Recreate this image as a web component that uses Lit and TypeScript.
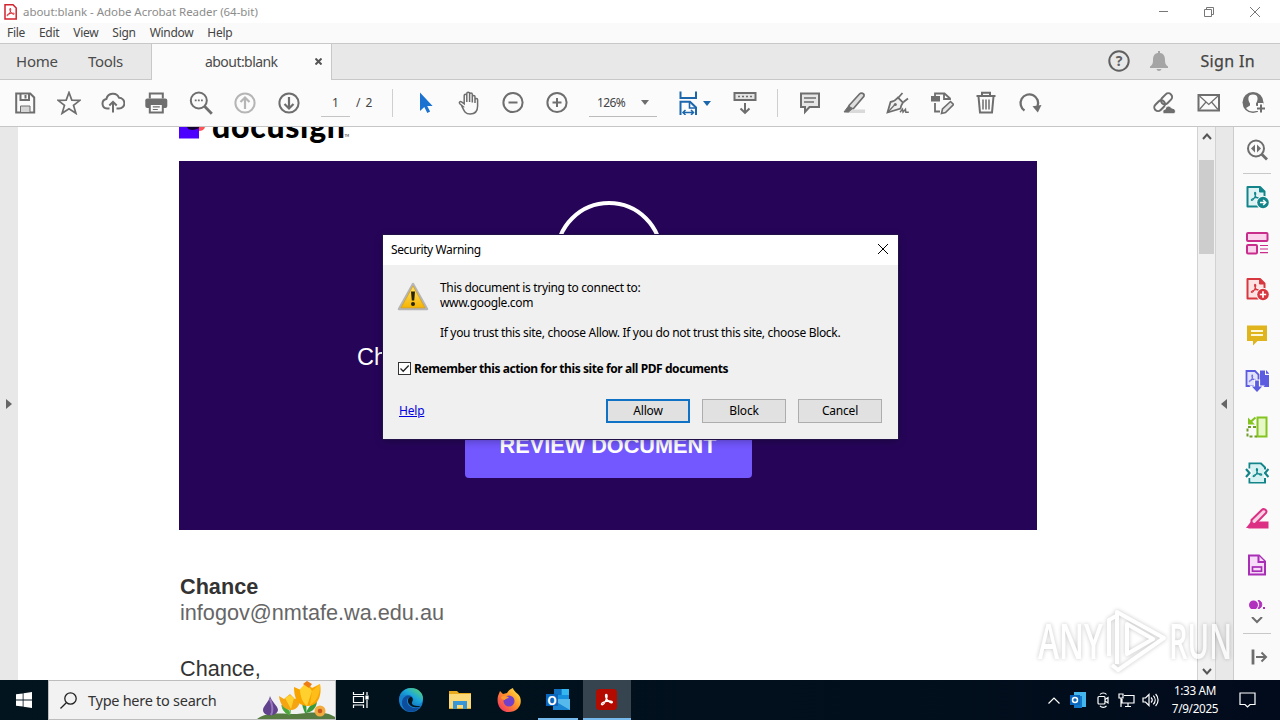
import { LitElement, html, svg, css, TemplateResult } from 'lit';
import { customElement } from 'lit/decorators.js';

const icon = (body: TemplateResult, size = 24) => html`
  <svg class="icon" width=${size} height=${size} viewBox="0 0 ${size} ${size}">${body}</svg>
`;

// the three-lobed Acrobat mark, drawn in a 10x10 box
const trefoil = (x: number, y: number, scale: number, color: string) => svg`
  <path transform="translate(${x} ${y}) scale(${scale})" fill="none" stroke=${color}
    stroke-width="1.1" stroke-linecap="round" stroke-linejoin="round"
    d="M4.6.8c.9 0 .8 1.6.2 3.3C4 6.300 2.500 8.900 1.400 9 .3 9 .7 7.600 2.600 6.900c1.800-.7 4.300-1 5.800-.8 1.500.2 1.300 1.500.1 1.300C7 7.200 4.900 5 4.300 3 3.900 1.700 4 .8 4.600.8z" />
`;

const docIcon = (color: string, tint: string, badge: TemplateResult) => icon(svg`
  <path d="M2.500 2h12.500l4.500 4.500V21.500H2.500z" fill=${tint} stroke=${color} stroke-width="2" stroke-linejoin="round" />
  <path d="M14.500 2v5h5" fill=${color} stroke=${color} stroke-width="1" />
  ${trefoil(5.5, 6.5, 1, color)}
  <circle cx="18" cy="17.500" r="6.800" fill="#fafafa" stroke="none" />
  <circle cx="18" cy="17.500" r="5.800" fill=${color} stroke="none" />
  ${badge}
`);

const icons = {
  save: icon(svg`
    <path d="M3.200 2.500h14l4 4v15h-18z" />
    <path d="M7.500 2.500v6.500h8.500V2.500M12.500 4v3.500" />
    <path d="M7.500 21.500v-6.500h9.500v6.500z" fill="#d5d5d5" stroke-width="1" />
  `),
  star: icon(svg`<path d="M12 1.500l2.800 7.600 8.200.2-6.500 5 2.400 8L12 17.700l-6.900 4.600 2.400-8-6.500-5 8.200-.2z" stroke-width="1.700" />`),
  cloud: icon(svg`
    <path d="M8.500 17.500H6a4.800 4.800 0 0 1-.6-9.500 6.700 6.700 0 0 1 12.700-1.200A5.300 5.300 0 0 1 18 17.500h-2.500" />
    <path d="M12 21.500v-10M8.300 14.500L12 10.800l3.700 3.700" />
  `),
  print: icon(svg`
    <path d="M4.800 7.500V2.500h13v5" />
    <rect x=".3" y="7.500" width="22" height="9.500" rx="2" fill="#6e6e6e" stroke="none" />
    <path d="M4.800 13h13v8.500h-13z" fill="#fbfbfb" />
    <path d="M7.800 15.800h7M7.800 18.500h5" stroke-width="1.200" />
  `),
  find: icon(svg`
    <circle cx="9.800" cy="9.500" r="8" />
    <path d="M15.500 15.300l7.300 7.400" stroke-width="2.800" />
    <path d="M5.800 8.500h1.800v1.800H5.800zM8.900 8.500h1.800v1.800H8.900zM12 8.500h1.800v1.800H12z" fill="#6e6e6e" stroke="none" />
  `),
  up: icon(svg`<circle cx="12" cy="12" r="9.600" stroke="#b5b5b5" /><path d="M12 18V7M7.500 11L12 6.500l4.500 4.500" stroke="#b5b5b5" stroke-width="2.200" />`),
  down: icon(svg`<circle cx="12" cy="12" r="9.600" /><path d="M12 6v11M7.500 13l4.500 4.500 4.500-4.500" stroke-width="2.200" />`),
  pointer: icon(svg`<path d="M7 1.500v18.500l4.300-4 3 6 2.800-1.400-2.900-5.600h5.400z" fill="#1b72d0" stroke="none" />`),
  hand: icon(svg`
    <path stroke-width="1.500" d="M6 15.500L2.800 12.700c-1.200-1.200.2-2.800 1.700-1.900l2.700 2V4.500c0-1.700 2.600-1.700 2.600 0V11 2.500c0-1.700 2.800-1.700 2.800 0V11 3.200c0-1.700 2.700-1.700 2.700 0V11.500 5.700c0-1.700 2.700-1.700 2.700 0V12v-3.500c.3-1.500 2.600-1.400 2.600.3V15c0 5-2.600 8-7.500 8-5 0-6-3-8.100-7.500z" />
  `),
  minus: icon(svg`<circle cx="12" cy="11.500" r="9.600" /><path d="M7.500 11.500h9" stroke-width="2" />`),
  plus: icon(svg`<circle cx="12" cy="11.500" r="9.600" /><path d="M7.500 11.500h9M12 7v9" stroke-width="2" />`),
  fit: icon(svg`
    <g stroke="#1b66ac">
      <path d="M3.500 .5V7H19V.5" /><path d="M3.500 24V10.800h9.500l6 5.700V24" /><path d="M12.500 11v6h6.500" stroke-width="1.600" />
      <path d="M6.500 21.500H16M8.500 19l-2.500 2.500L8.500 24M14 19l2.500 2.500-2.500 2.500" stroke-width="1.500" />
    </g>
  `),
  keyboard: icon(svg`
    <rect x="1.500" y="2" width="21" height="7" fill="#e4e4e4" />
    <path d="M5 5.500h14" stroke-dasharray="2 2" stroke-width="1.700" />
    <path d="M12 12v9M7.500 17.500l4.500 4.300 4.500-4.300" />
  `),
  comment: icon(svg`
    <path d="M3 2.500h18v13.500H11.500l-4.500 5v-5H3z" fill="#e6e6e6" />
    <path d="M6 7h12M6 11h10" stroke-width="1.300" />
  `),
  highlight: icon(svg`
    <path d="M6 18.500h17v3.500H4z" fill="#d9d9d9" stroke="none" />
    <path d="M7 14.500L17.500 3c1.600-1.600 5.400-.8 4.400 2.300L11.500 17.500l-4 .2z" fill="#dedede" stroke-width="1.700" />
    <path d="M6.500 15L2 21h4.500l4-3.500z" fill="#6e6e6e" stroke-width="1" />
  `),
  sign: icon(svg`
    <path d="M1.500 21.500L4.500 11c3-.5 5.500-2 7.500-4.500l5 5c-1.500 2-2 3.500-2.500 6z" fill="#f0f0f0" stroke-width="1.800" />
    <path d="M12.500 6.500L16.500 2M17.500 11L22 7.500" stroke-width="1.800" /><path d="M2 21l6.500-7" stroke-width="1.300" />
    <circle cx="9.300" cy="13.500" r="1.500" fill="#6e6e6e" stroke="none" />
    <path d="M14 21.200l2.500-3 .5 3 2.500-3 .3 3h3" stroke-width="1.400" />
  `),
  edit: icon(svg`
    <path d="M5 5.500V2.500h9.500l5.500 5V9M14 2.500V8h5.500M5 12v8.500h5" stroke-width="1.800" />
    <rect x="1" y="5" width="9" height="5.500" fill="#6e6e6e" stroke="none" />
    <path d="M11.500 22.500l1-4.500L20.500 10.500l3 3-8 8z" fill="#e6e6e6" stroke-width="1.600" />
  `),
  trash: icon(svg`
    <path d="M2.500 5h19M8 4.500V1.800h8V4.500" /><path d="M4.500 5.500l1.500 16h12l1.500-16" />
    <path d="M9 8.500v10M12 8.500v10M15 8.500v10" stroke-width="1.500" />
  `),
  rotate: icon(svg`
    <path d="M6.500 19.500A8.800 8.800 0 1 1 19.500 15.500" stroke-width="2.300" />
    <path d="M14.500 15.300l9-1.300-3.700 7.500z" fill="#6e6e6e" stroke="none" />
  `),
  link: icon(svg`
    <g transform="rotate(-45 11 11)"><rect x="0" y="7.500" width="12" height="7.500" rx="3.700" /><rect x="9.500" y="7.500" width="12.500" height="7.500" rx="3.700" /></g>
    <path d="M12 22.800c-2-1.200-1.300-4.600 1.200-4.500.5-4 5-4.300 6.300-1.300 4.500.2 4.800 4.600 2.500 5.800z" fill="#6e6e6e" stroke="#fbfbfb" stroke-width="1" />
  `),
  mail: icon(svg`<rect x="1.500" y="4" width="20.500" height="15.500" /><path d="M2.500 5l9.300 8.500L21 5M2.500 18.500L9 11M21 18.500L14.500 11" stroke-width="1.200" />`),
  account: icon(svg`
    <circle cx="11" cy="11.500" r="10.500" fill="#6e6e6e" stroke="none" />
    <path d="M11 3.500c5.500 0 5.500 5 3 9v2l4 2.500c-3 4.800-11 4.800-14 0l4-2.500v-2c-2.500-4-2.500-9 3-9z" fill="#fbfbfb" stroke="none" />
    <path d="M18.500 12v11M13 17.500h11" stroke="#fbfbfb" stroke-width="5" />
    <path d="M19 13.500v8M15 17.500h8" stroke-width="2" />
  `),
};

// side panel tools, top to bottom
const tools = [
  docIcon('#13858a', '#dff3f5', svg`<path d="M15 17.500h5.500M18.200 15l2.500 2.500-2.500 2.500" stroke="#fff" stroke-width="1.500" fill="none" />`),
  icon(svg`
    <g fill="#fbd3ec" stroke="#c92d8b" stroke-width="2">
      <rect x="2" y="2" width="20.500" height="8" rx="1" /><rect x="2" y="14" width="10" height="8.500" rx="1" />
      <path d="M15 14.500h8M15 18h8M15 21.700h8" stroke-width="1.200" />
    </g>
  `),
  docIcon('#d7373f', '#fde3e3', svg`<path d="M14.800 17.500h6.400M18 14.300v6.400" stroke="#fff" stroke-width="1.700" />`),
  icon(svg`
    <path d="M2 2.500h20V18H12.500L8 22.500V18H2z" fill="#dfb41c" stroke="none" />
    <path d="M6 8h12M6 12h12" stroke="#fff7d5" stroke-width="2" />
  `),
  icon(svg`
    <path d="M1.500 2h8.500l3.500 3.500V17h-12z" fill="#e2e2fc" stroke="#5c5ce0" stroke-width="1.800" />
    ${trefoil(3.5, 5.5, 0.8, '#5c5ce0')}
    <path d="M15 1.500h5V6h4.500v12H15z" fill="#5c5ce0" stroke="none" /><path d="M21 1l3.500 3.800H21z" fill="#5c5ce0" stroke="none" />
    <path d="M9.500 11h5v6h4L12 24l-6.500-7h4z" fill="#5c5ce0" stroke="#fafafa" stroke-width="1.200" />
  `),
  icon(svg`
    <rect x="12.500" y="2.500" width="9" height="19" fill="#e6f7c8" stroke="#84c420" stroke-width="2" />
    <path d="M11 12H2.500v9.500H12" stroke="#6f9e28" stroke-dasharray="3 2" />
    <path d="M10.500 2.500L6 6.500" stroke="#84c420" stroke-width="2.200" /><path d="M3 2.500v7h7z" fill="#84c420" stroke="none" />
  `),
  icon(svg`
    <path d="M4.500 7.500V2.500H16l4 4v2M4.500 17v4.500H20V17" stroke="#13858a" />
    <path d="M1 8l3.500 4L1 16M23.500 8L20 12l3.500 4" stroke="#13858a" stroke-width="2.200" />
    <path d="M5.500 3.500H15l4 4V21H5.500V15l2-3-2-3z" fill="#d5f1f1" stroke="none" />${trefoil(7.3, 6.8, 1, '#13858a')}
  `),
  icon(svg`
    <path d="M12 14.500h11.500v7H3z" fill="#db3084" stroke="none" />
    <path d="M6.500 13L17 2.800c1.500-1.500 5.800 0 4 3.200L10.500 16.800l-4 .2z" fill="#fbd3e6" stroke="#db3084" />
    <path d="M6 14.500L1 21h7l3-4z" fill="#db3084" stroke="none" />
  `),
  icon(svg`
    <path d="M4 2.500h10l6 6v13H4z" fill="#f7dcf9" stroke="#a82fb5" />
    <path d="M13.500 2.500V9H20" stroke="#a82fb5" fill="#f7dcf9" /><rect x="7.500" y="14" width="9" height="4.200" stroke="#a82fb5" stroke-width="1.700" />
  `),
];

const cross = (size: number) => html`
  <svg width=${size} height=${size} viewBox="0 0 10 10"><path d="M0 0l10 10M10 0L0 10" fill="none" stroke="currentColor" stroke-width="1" /></svg>
`;

@customElement('window-header')
export class WindowHeader extends LitElement {
  static styles = css`
    :host { display: block; }
    .title {
      display: flex;
      align-items: center;
      height: 23px;
      background: #fff;
      color: #8c8c8c;
      font-size: 11.5px;
      padding-left: 4px;
    }
    .title .name { margin-left: 6px; letter-spacing: -.04px; }
    .controls {
      margin-left: auto;
      display: flex;
      padding-right: 2px;
    }
    .controls span { width: 46px; height: 22px; display: grid; place-items: center; color: #777; }
    .controls svg { fill: none; stroke: #777; }
    .menu {
      display: flex;
      gap: 14px;
      align-items: center;
      height: 20px;
      padding-left: 7px;
      box-sizing: border-box;
      padding-bottom: 1px;
      background: #fafafa;
      font-size: 12px;
      letter-spacing: -.3px;
      color: #444;
    }
    .tabs {
      display: flex;
      box-sizing: border-box;
      height: 37px;
      border-top: 1px solid #c8c8c8;
      border-bottom: 1px solid #c8c8c8;
      background: #e8e8e8;
      color: #4b4b4b;
      font-size: 15px;
      align-items: center;
    }
    .home, .tools { padding-bottom: 2px; }
    .home { margin-left: 16px; width: 72px; letter-spacing: -.2px; }
    .tools { width: 63px; letter-spacing: -.3px; }
    .tab {
      box-sizing: border-box;
      width: 181px;
      height: 36px;
      align-self: flex-start;
      background: #fbfbfb;
      border: solid #c8c8c8;
      border-width: 0 1px;
      display: flex;
      align-items: center;
      padding: 0 9px 1px 53px;
      justify-content: space-between;
      font-size: 14px;
      letter-spacing: -.55px;
    }
    .tab svg { stroke-width: 2; color: #555; }
    .account { margin-left: auto; display: flex; align-items: center; padding: 0 25px 2px 0; }
    .account svg { fill: none; stroke: #606060; stroke-width: 2; }
    .account .bell { margin: 0 32px 0 20px; fill: #a5a5a5; stroke: none; }
    .signin { font-size: 16px; letter-spacing: .35px; color: #444; -webkit-text-stroke: .25px #444; }
    .account .help { font: bold 14px 'Noto Sans', sans-serif; fill: #606060; stroke: none; }
  `;

  render() {
    return html`
      <div class="title">
        <svg width="13" height="16" viewBox="0 0 13 16">
          <path d="M1 .8h8l3.200 3.200v11H1z" fill="#fff" stroke="#d2222d" stroke-width="1.500" />
          ${trefoil(2.3, 4, 0.85, '#d2222d')}
        </svg>
        <span class="name">about:blank - Adobe Acrobat Reader (64-bit)</span>
        <div class="controls">
          <span><svg width="10" height="10"><path d="M1 4.500h10" /></svg></span>
          <span><svg width="10" height="10"><path d="M.5 2.500h7v7h-7zM2.500 2.500v-2h7v7h-2" /></svg></span>
          <span>${cross(10)}</span>
        </div>
      </div>
      <div class="menu">
        ${['File', 'Edit', 'View', 'Sign', 'Window', 'Help'].map((m) => html`<span>${m}</span>`)}
      </div>
      <div class="tabs">
        <span class="home">Home</span>
        <span class="tools">Tools</span>
        <div class="tab">
          <span>about:blank</span>
          <svg width="7" height="7" viewBox="0 0 7 7"><path d="M.5.5l6 6M6.500.5l-6 6" stroke="#555" /></svg>
        </div>
        <div class="account">
          <svg width="22" height="22"><circle cx="11" cy="11" r="9.700" /><text class="help" x="7.800" y="16">?</text></svg>
          <svg class="bell" width="18" height="20" viewBox="0 0 18 20">
            <path d="M8 0h2v2c4 .5 5 3.500 5 7 0 4 1 5 3 6.500V17H0v-1.500C2 14 3 13 3 9c0-3.500 1-6.500 5-7zM6.500 18h5c-.5 2.500-4.500 2.500-5 0z" />
          </svg>
          <span class="signin">Sign In</span>
        </div>
      </div>
    `;
  }
}

@customElement('tool-bar')
export class ToolBar extends LitElement {
  static styles = css`
    :host {
      display: flex;
      align-items: center;
      box-sizing: border-box;
      height: 47px;
      padding: 0 4px 0 3px;
      border-bottom: 1px solid #c6c6c6;
      background: #fbfbfb;
      color: #444;
      font-size: 12px;
    }
    .cell { width: 44px; height: 46px; display: grid; place-items: center; }
    .icon { fill: none; stroke: #6e6e6e; stroke-width: 2; }
    .page { width: 29px; box-sizing: border-box; border-bottom: 1px solid #c4c4c4; height: 27px; line-height: 26px; padding-left: 11px; margin-left: 10px; }
    .count { width: 36px; margin-left: 6px; word-spacing: 2px; height: 27px; line-height: 26px; }
    .divider { width: 1px; height: 28px; background: #cfcfcf; }
    .divider.first { margin-right: 10px; }
    .divider.last { margin: 0 10px; }
    .zoom {
      display: flex;
      align-items: center;
      justify-content: space-between;
      box-sizing: border-box;
      width: 68px;
      height: 28px;
      margin: 0 10px;
      padding: 0 8px 0 8px;
      border-bottom: 1px solid #bbb;
      letter-spacing: -.6px;
    }
    .arrow { border: 4px solid transparent; border-top: 5px solid #6e6e6e; border-bottom: 0; }
    .arrow.blue { border-top-color: #1b66ac; }
    .fit { display: flex; align-items: center; width: 56px; padding-left: 10px; box-sizing: border-box; gap: 2px; }
    .right { display: flex; margin-left: auto; }
    .right .cell { width: 45px; }
  `;

  render() {
    const cell = (i: TemplateResult) => html`<div class="cell">${i}</div>`;
    const { save, star, cloud, print, find, up, down } = icons;
    return html`
      ${[save, star, cloud, print, find, up, down].map(cell)}
      <div class="page">1</div>
      <div class="count">/ 2</div>
      <div class="divider first"></div>
      ${[icons.pointer, icons.hand, icons.minus, icons.plus].map(cell)}
      <div class="zoom">126% <i class="arrow"></i></div>
      <div class="fit">${icons.fit}<i class="arrow blue"></i></div>
      ${cell(icons.keyboard)}
      <div class="divider last"></div>
      ${[icons.comment, icons.highlight, icons.sign, icons.edit, icons.trash, icons.rotate].map(cell)}
      <div class="right">${[icons.link, icons.mail, icons.account].map(cell)}</div>
    `;
  }
}

@customElement('pdf-page')
export class PdfPage extends LitElement {
  static styles = css`
    :host {
      display: block;
      flex: 1;
      overflow: hidden;
      background: #fff;
      padding-left: 161px;
      font-family: 'Liberation Sans', Arial, sans-serif;
      font-size: 21.67px;
    }
    .logo { display: block; }
    .wordmark { font: 900 32px Lato, sans-serif; }
    .tm { font: 3px Lato, sans-serif; }
    .banner {
      display: grid;
      grid-template-rows: 156px 39px 83px;
      justify-items: center;
      box-sizing: border-box;
      width: 858px;
      height: 369px;
      padding-top: 39px;
      background: #260559;
      color: #fff;
    }
    .ring { fill: none; stroke: #fff; stroke-width: 4; }
    .heading { justify-self: start; margin: -15px 0 0 178px; font-size: 23.500px; line-height: 32px; }
    .button {
      box-sizing: border-box;
      width: 287px;
      height: 66px;
      margin-top: 17px;
      border-radius: 4px;
      background: #7357ff;
      font-size: 21.700px;
      font-weight: bold;
      line-height: 67px;
      text-align: center;
    }
    .text { margin: 44px 0 0 1px; line-height: 26px; color: #333; }
    .mail { color: #666; }
    .body { margin-top: 30px; }
  `;

  render() {
    return html`
      <svg class="logo" width="200" height="34" viewBox="0 0 200 34">
        <path d="M0 0h20v11.500H0z" fill="#4c00ff" />
        <path d="M8 0c1 4 9 4 13 0z" fill="#140032" /><path d="M20 0h6c-.5 2.500-3 4-6 4z" fill="#ff5252" />
        <text class="wordmark" x="33" y="11" textLength="133">docusign</text><text class="tm" x="165.500" y="10">TM</text>
      </svg>
      <div class="banner">
        <svg class="ring" width="110" height="110"><circle cx="56" cy="55" r="52" /></svg>
        <div class="heading">Ch</div>
        <div class="button">REVIEW DOCUMENT</div>
      </div>
      <div class="text">
        <b>Chance</b>
        <div class="mail">infogov@nmtafe.wa.edu.au</div>
        <div class="body">Chance,</div>
      </div>
    `;
  }
}

@customElement('side-panel')
export class SidePanel extends LitElement {
  static styles = css`
    :host { display: flex; flex: none; }
    .scroll {
      box-sizing: border-box;
      width: 19px;
      border: solid #d2d2d2;
      border-width: 0 1px;
      background: #f1f1f1;
      display: flex;
      flex-direction: column;
      align-items: center;
    }
    .scroll svg { flex: none; fill: none; stroke: #555; stroke-width: 2; }
    .thumb { width: 15px; height: 94px; margin-top: 20px; background: #cdcdcd; }
    .scroll .end { margin: auto 0 5px; }
    .scroll .start { margin-top: 6px; }
    .strip {
      box-sizing: border-box;
      width: 18px;
      border-right: 1px solid #ccc;
      background: #e8e8e8;
      display: flex;
      align-items: center;
      padding-left: 5px;
    }
    .collapse { border: 5px solid transparent; border-right: 6px solid #666; border-left: 0; }
    .list { width: 46px; background: #fafafa; display: flex; flex-direction: column; align-items: center; }
    .cell { flex: none; height: 46px; display: grid; place-items: center; }
    .icon { fill: none; stroke: #6e6e6e; stroke-width: 2; }
    hr { width: 28px; height: 1px; margin: 0; border: 0; background: #c8c8c8; flex: none; }
    .more { flex: none; height: 15px; padding-top: 12px; }
    .down { flex: none; box-sizing: border-box; padding-top: 2px; }
    svg { display: block; }
  `;

  render() {
    return html`
      <div class="scroll">
        <svg class="start" width="10" height="7"><path d="M1 6l4-4.500 4 4.500" /></svg>
        <div class="thumb"></div>
        <svg class="end" width="10" height="7"><path d="M1 1l4 4.500L9 1" /></svg>
      </div>
      <div class="strip"><i class="collapse"></i></div>
      <div class="list">
        <div class="cell">${icon(svg`
          <circle cx="11" cy="10.500" r="8" /><path d="M16.500 16l5.500 5.500" stroke-width="2.800" />
          <path d="M10 6.500v8l-4-4zM12 6.500v8l4-4z" fill="#6e6e6e" stroke="none" />
        `)}</div>
        <hr />
        ${tools.map((t) => html`<div class="cell">${t}</div>`)}
        <div class="more">
          <svg width="18" height="9"><circle cx="5.500" cy="5" r="4.500" fill="#b130bd" /><path d="M10 0c5 1 5 8 0 9 2-3 2-6 0-9z" fill="#b130bd" stroke="#b130bd" /><path d="M15 7h2v2h-2z" fill="#b130bd" /></svg>
        </div>
        <svg class="down" width="12" height="18"><path d="M1 0l5 5 5-5" fill="none" stroke="#6e6e6e" stroke-width="2" /></svg>
        <hr />
        <div class="cell">${icon(svg`<path d="M8 4.500v15" stroke-width="2.800" /><path d="M11 12h9.500M16.500 7.500L21 12l-4.500 4.500" />`)}</div>
      </div>
    `;
  }
}

@customElement('security-dialog')
export class SecurityDialog extends LitElement {
  static styles = css`
    :host {
      display: block;
      box-sizing: border-box;
      width: 515px;
      height: 204px;
      background: #f0f0f0;
      color: #000;
      font-size: 12px;
      line-height: 15px;
      box-shadow: 0 0 0 1px #23124a, 0 2px 8px rgba(0, 0, 0, .3);
    }
    .title {
      box-sizing: border-box;
      height: 30px;
      padding: 0 10px 1px 8px;
      display: flex;
      align-items: center;
      justify-content: space-between;
      background: #fff;
      letter-spacing: -.4px;
    }
    .title svg { margin-top: -1px; }
    .message { display: flex; gap: 11px; padding: 15px 0 0 14px; }
    .message svg { margin-top: 2px; }
    .message p { margin: 0 0 15px; letter-spacing: -.32px; }
    .remember { display: flex; align-items: center; gap: 3px; padding: 6px 0 0 15px; font-weight: 700; letter-spacing: -.42px; }
    .box { box-sizing: border-box; width: 13px; height: 13px; border: 1px solid #333; background: #fff; }
    .box svg { display: block; }
    .footer { display: flex; align-items: center; gap: 12px; padding: 23px 16px 0; }
    .link { margin: -2px auto 0 0; letter-spacing: -.2px; color: #0000e0; text-decoration: underline; }
    .button {
      box-sizing: border-box;
      width: 84px;
      height: 24px;
      border: 1px solid #adadad;
      background: #e1e1e1;
      line-height: 22px;
      text-align: center;
      letter-spacing: -.2px;
    }
    .button.default { border: 2px solid #0f72c4; line-height: 20px; }
  `;

  render() {
    return html`
      <div class="title"><span>Security Warning</span>${cross(10)}</div>
      <div class="message">
        <svg width="32" height="30" viewBox="0 0 32 30">
          <defs>
            <linearGradient id="warn" x1="0" y1="0" x2="0" y2="1"><stop offset="0" stop-color="#ffe36a" /><stop offset="1" stop-color="#f6b400" /></linearGradient>
          </defs>
          <path d="M16 2L30 27H2z" fill="#ddd" stroke="#b5b5b5" stroke-width="2.500" stroke-linejoin="round" />
          <path d="M16 4L28 25.800H4z" fill="url(#warn)" stroke="#d79a00" stroke-width=".7" />
          <path d="M14 9.500h4l-.8 9h-2.400z" fill="#26230f" /><circle cx="16" cy="22" r="2" fill="#26230f" />
        </svg>
        <div>
          <p>This document is trying to connect to:<br />www.google.com</p>
          <p>If you trust this site, choose Allow. If you do not trust this site, choose Block.</p>
        </div>
      </div>
      <div class="remember">
        <span class="box"><svg width="11" height="11"><path d="M1.500 5.500L4.200 8.200 9.700 2.500" fill="none" stroke="#222" stroke-width="1.300" /></svg></span>
        Remember this action for this site for all PDF documents
      </div>
      <div class="footer">
        <span class="link">Help</span>
        <div class="button default">Allow</div>
        <div class="button">Block</div>
        <div class="button">Cancel</div>
      </div>
    `;
  }
}

@customElement('task-bar')
export class TaskBar extends LitElement {
  static styles = css`
    :host { display: flex; height: 40px; background: linear-gradient(90deg, #02141e, #01101c 60%, #020b1c); color: #fff; }
    svg { display: block; }
    .start { width: 48px; display: grid; place-items: center; }
    .search {
      box-sizing: border-box;
      width: 288px;
      border: 1px solid #bdbdbd;
      background: #f2f2f2;
      display: flex;
      align-items: center;
      padding-left: 11px;
      gap: 11px;
      color: #333;
      font-size: 14.500px;
      letter-spacing: -.27px;
    }
    .flowers { margin-left: auto; }
    .app { width: 49px; display: grid; place-items: center; box-sizing: border-box; }
    .app.first { width: 50px; padding-left: 1px; }
    .app.open { border-bottom: 2px solid #76b9ed; padding-top: 2px; width: 40px; margin: 0 4px 0 5px; }
    .app.active { width: 48px; margin: 0 0 0 1px; background: #35444f; }
    .tray { display: flex; align-items: center; margin-left: auto; padding-right: 24px; }
    .tray svg { fill: none; stroke: #fff; stroke-width: 1.200; }
    .tray .chevron { margin-right: 10px; }
    .tray .outlook { margin-right: 11px; stroke: none; }
    .tray .cast { margin-right: 8px; }
    .tray .net { margin-right: 7px; }
    .clock { width: 62px; margin: -2px 13px 0 5px; font-size: 11.700px; line-height: 18px; text-align: center; letter-spacing: -.3px; }
    .o { font: bold 12px 'Open Sans', sans-serif; fill: #fff; }
  `;

  render() {
    return html`
      <div class="start">
        <svg width="16" height="16" fill="#fff"><path d="M0 2.300L6.700 1.400V7.600H0zM7.500 1.200L16 0v7.600H7.500zM0 8.400h6.700v6.200L0 13.700zM7.500 8.400H16V16l-8.500-1.200z" /></svg>
      </div>
      <div class="search">
        <svg width="17" height="17"><circle cx="10.500" cy="6.500" r="5.700" fill="none" stroke="#222" stroke-width="1.300" /><path d="M6.300 10.700L.5 16.500" stroke="#222" stroke-width="1.300" /></svg>
        Type here to search
        <svg class="flowers" width="80" height="38">
          <path d="M2 38c10-8 26-5 40-5 14-2 30-3 38 3v2z" fill="#567c42" />
          <path d="M35 32c0-9 1-12 2-12M35 34c-6-2-8-7-8-10 5 2 8 7 8 10z" fill="#4da83c" stroke="#4da83c" />
          <path d="M50 32c-4-9-3-13-3-16 5 6 5 12 4 16 2-6 6-10 11-11-1 7-6 11-12 11z" fill="#399a3b" />
          <path d="M15 15c1 5 8 10 8 14-1 7-15 7-15 0 0-4 6-8 7-14z" fill="#60438c" /><path d="M15 18c3 7 3 12 1 16" stroke="#9877bd" stroke-width="2" fill="none" />
          <path d="M24 15l5 3 6-5 5 5 6-4c0 9-4 15-10 15s-11-5-12-14z" fill="#f5a512" /><path d="M30 17l5-3 4 3-3 11z" fill="#ffd02e" />
          <path d="M39 6l7 3 5-8 6 6 8-4c2 10-1 22-12 22S39 16 39 6z" fill="#f7a400" />
          <path d="M45 8l6-6 6 8-5 15c-4-3-7-9-7-17z" fill="#ffd02e" /><path d="M57 10l8-7c0 9-2 16-10 21z" fill="#ffbd19" /><path d="M48 3l4-3 5 3-3 4z" fill="#ed7d13" />
          <circle cx="65" cy="30" r="5.500" fill="#f2ab3e" /><circle cx="65" cy="30" r="2.300" fill="#c9581a" />
        </svg>
      </div>
      <div class="app">
        <svg width="18" height="18" fill="none" stroke="#fff" stroke-width="1.200"><path d="M1.500 1v2.500h10V1M1.500 5.500h10v6h-10zM1.500 17v-3h10v3M15 1v3M15 9v8" /><path d="M14 5h2v3h-2z" fill="#fff" /></svg>
      </div>
      <div class="app first">
        <svg width="24" height="24" viewBox="0 0 24 24">
          <defs>
            <linearGradient id="edge" x1="0" y1="1" x2="1" y2="0"><stop offset="0" stop-color="#0c59a4" /><stop offset=".55" stop-color="#1ba6dc" /><stop offset="1" stop-color="#65dd5b" /></linearGradient>
          </defs>
          <circle cx="12" cy="12" r="12" fill="#1681cf" />
          <path d="M0 11C1 4 6 0 12 0c7 0 12 5 12 10 0 5-4 7-8 7-3 0-4-1-2-3 2-5-3-8-7-7-4 0-6 2-7 4z" fill="url(#edge)" />
          <path d="M8 13c0 5 6 9 13 6-3 4-8 6-13 4-6-3-7-12-1-15 3-1 5 0 6 1-3 0-5 1-5 4z" fill="#0e4c9c" />
          <path d="M13 14c2-3 0-5-1-5-3 0-4 4-2 7 3 4 8 4 12 2-5 0-10 0-9-4z" fill="#02141e" />
        </svg>
      </div>
      <div class="app">
        <svg width="22" height="20"><path d="M0 1h8l2 2h12v16H0z" fill="#e9a91d" /><path d="M0 4h22v14H0z" fill="#fbd878" /><path d="M4 19v-8h14v8h-4v-4H8v4z" fill="#3895d6" /></svg>
      </div>
      <div class="app">
        <svg width="24" height="24" viewBox="0 0 24 24">
          <defs>
            <linearGradient id="fox" x1="1" y1="0" x2="0" y2="1"><stop offset="0" stop-color="#fff34a" /><stop offset=".45" stop-color="#ff9328" /><stop offset="1" stop-color="#f0246e" /></linearGradient>
          </defs>
          <path d="M1 8l2-5 3 3 4-1c1-2 3-4 6-5 0 3 5 5 7 9 3 8-3 15-11 15S-1 17 1 8z" fill="url(#fox)" />
          <circle cx="12" cy="13" r="5.500" fill="#7440c8" /><path d="M4 9c3-2 7-1 8 1-2 0-4 1-4 2-2 0-4-1-4-3z" fill="#ff9a2c" />
        </svg>
      </div>
      <div class="app open">
        <svg width="24" height="22">
          <path d="M8 0h15v11H8z" fill="#1490df" /><path d="M15.500 0H23v6h-7.500z" fill="#35b8f1" /><path d="M8 0h7.500v6H8z" fill="#0f6fc0" /><path d="M7 10h17v11H7z" fill="#55b9ec" /><path d="M7 11l17 10H7z" fill="#1985d3" />
          <path d="M0 5h12v12H0z" fill="#0a66bd" /><text class="o" x="1.200" y="15.500">O</text>
        </svg>
      </div>
      <div class="app open active">
        <svg width="22" height="22"><rect width="21" height="21" rx="3.500" fill="#b30b00" />${trefoil(4.5, 4.5, 1.25, '#fff')}</svg>
      </div>
      <div class="tray">
        <svg class="chevron" width="12" height="7"><path d="M.5 6.500L6 1l5.500 5.500" /></svg>
        <svg class="outlook" width="16" height="16"><path d="M4 0h12v15H4z" fill="#43b7ec" /><path d="M4 4h8v12H4z" fill="#1276c9" /><path d="M0 3h10v10H0z" fill="#0a66bd" /><circle cx="5" cy="8" r="2.500" stroke="#fff" stroke-width="1.500" /></svg>
        <svg class="cast" width="13" height="16"><rect x="1" y="4.500" width="7" height="7.500" rx="1" /><path d="M8 7.500l3-2v5.500l-3-2M3 2.500C4.500.5 8 .5 9.500 2.500M3 13.800c1.500 2 5 2 6.500 0" /></svg>
        <svg class="net" width="17" height="16"><path d="M6 3.500h10v7.500H4V7M1 2h4v4H1zM3 6v9M10 11v3.500M7 14.500h6" /></svg>
        <svg width="17" height="14"><path d="M1 5h2.500L7 1.500v11L3.500 9H1zM9 4.500c1.500 1.500 1.500 3.500 0 5M11.300 2.700c2.500 2.500 2.500 6 0 8.600M13.600 1c3.300 3.300 3.300 8.700 0 12" /></svg>
        <div class="clock">1:33 AM<br />7/9/2025</div>
        <svg width="17" height="16"><path d="M1 1h15v11.500h-5l-2.500 2.500L6 12.500H1z" /></svg>
      </div>
    `;
  }
}

@customElement('app-root')
export class AppRoot extends LitElement {
  static styles = css`
    :host {
      position: relative;
      display: flex;
      flex-direction: column;
      width: 1280px;
      height: 720px;
      overflow: hidden;
      font-family: 'Noto Sans', 'Open Sans', sans-serif;
    }
    .content { flex: 1; min-height: 0; display: flex; overflow: hidden; }
    .gutter { width: 18px; background: #e8e8e8; display: flex; align-items: center; padding-left: 6px; box-sizing: border-box; }
    .expand { border: 5px solid transparent; border-left: 6px solid #666; border-right: 0; }
    .dialog { position: absolute; left: 383px; top: 235px; }
    .watermark { position: absolute; left: 1030px; top: 604px; filter: drop-shadow(0 0 2px rgba(0, 0, 0, .3)); opacity: .75; }
    .watermark text { font: 600 48px 'Open Sans', sans-serif; fill: #fff; }
    .watermark path { fill: none; stroke: #fff; stroke-width: 4; stroke-linejoin: round; }
  `;

  render() {
    return html`
      <window-header></window-header>
      <tool-bar></tool-bar>
      <div class="content">
        <div class="gutter"><i class="expand"></i></div>
        <pdf-page></pdf-page>
        <side-panel></side-panel>
      </div>
      <task-bar></task-bar>
      <svg class="watermark" width="206" height="72">
        <text x="8" y="55" textLength="65" lengthAdjust="spacingAndGlyphs">ANY</text>
        <text x="139" y="55" textLength="63" lengthAdjust="spacingAndGlyphs">RUN</text>
        <path d="M79 52V16l7-4M87 60V8l47 26-46 32-6-5M97 50V20l26 15zM97 20v28" />
      </svg>
      <security-dialog class="dialog"></security-dialog>
    `;
  }
}
